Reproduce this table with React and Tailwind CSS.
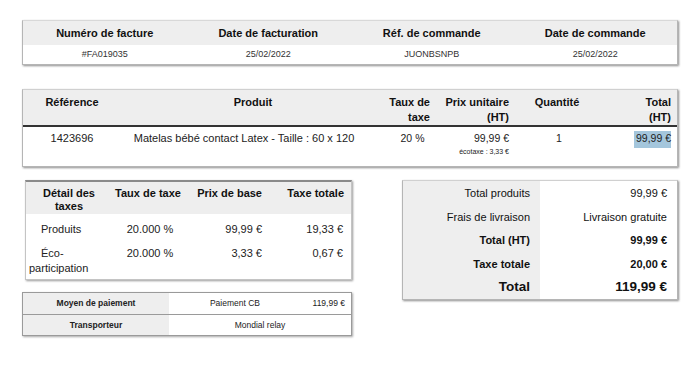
import React from "react";

const box = "border border-[#b5b5b5] shadow-[1px_1px_2px_rgba(0,0,0,0.45)]";

function InvoiceHeader() {
  const cols = [
    ["Numéro de facture", "#FA019035"],
    ["Date de facturation", "25/02/2022"],
    ["Réf. de commande", "JUONBSNPB"],
    ["Date de commande", "25/02/2022"],
  ];
  return (
    <div className={`mx-[22px] mt-[19px] ${box} border-t-[#d8d8d8]`}>
      <div className="grid grid-cols-4 bg-[#eeeeee] h-[24px] items-center">
        {cols.map(([h]) => (
          <div key={h} className="text-center font-bold text-[11px] text-[#111]">{h}</div>
        ))}
      </div>
      <div className="grid grid-cols-4 h-[19px] items-center">
        {cols.map(([h, v]) => (
          <div key={h} className="text-center text-[9px] text-[#333]">{v}</div>
        ))}
      </div>
    </div>
  );
}

function ProductTable() {
  const grid = "grid grid-cols-[96px_264px_53px_79px_84px_82px]";
  return (
    <div className={`mx-[22px] mt-[24px] ${box} border-t-[#d0d0d0]`}>
      <div className={`${grid} bg-[#eeeeee] h-[37px] border-b-2 border-[#333] text-[11px] font-bold text-[#111] leading-[15px] pt-[5px]`}>
        <div className="text-center pl-[2px]">Référence</div>
        <div className="text-center pl-[4px]">Produit</div>
        <div className="text-right pr-[6px]">Taux de<br />taxe</div>
        <div className="text-right pr-[6px]">Prix unitaire<br />(HT)</div>
        <div className="text-center">Quantité</div>
        <div className="text-right pr-[10px]">Total<br />(HT)</div>
      </div>
      <div className={`${grid} h-[39px] text-[10.5px] text-[#222] leading-[15px] pt-[4px]`}>
        <div className="text-center pl-[2px] text-[11px]">1423696</div>
        <div className="text-center whitespace-nowrap pr-[14px] text-[11px]">Matelas bébé contact Latex - Taille : 60 x 120</div>
        <div className="text-center pl-[6px]">20 %</div>
        <div className="text-right pr-[6px]">
          <div>99,99 €</div>
          <div className="text-[7px] leading-[12px]">écotaxe : 3,33 €</div>
        </div>
        <div className="text-center pl-[4px]">1</div>
        <div className="flex justify-end pr-[10px]">
          <span className="bg-[#a4c6dc] pl-[2px] h-[17px] leading-[15px]">99,99 €</span>
        </div>
      </div>
    </div>
  );
}

function TaxDetail() {
  const grid = "grid grid-cols-[84px_76px_82px_85px]";
  return (
    <div className="w-[327px] ml-[3px] border border-[#c4c4c4] border-t-2 border-t-[#8a8a8a] shadow-[1px_1px_2px_rgba(0,0,0,0.4)]">
      <div className={`${grid} bg-[#eeeeee] h-[32px] text-[11px] font-bold text-[#111] leading-[13px] pt-[5px]`}>
        <div className="text-center pl-[2px]">Détail des<br />taxes</div>
        <div className="text-center">Taux de taxe</div>
        <div className="text-right pr-[6px]">Prix de base</div>
        <div className="text-right pr-[9px]">Taxe totale</div>
      </div>
      <div className={`${grid} h-[28px] pt-[8px] text-[11px] text-[#222] leading-[15px]`}>
        <div className="pl-[15px]">Produits</div>
        <div className="text-center pl-[4px]">20.000 %</div>
        <div className="text-right pr-[6px]">99,99 €</div>
        <div className="text-right pr-[10px]">19,33 €</div>
      </div>
      <div className={`${grid} h-[37px] pt-[4px] text-[11px] text-[#222] leading-[15px]`}>
        <div className="pl-[3px]">
          <div className="pl-[12px]">Éco-</div>
          <div>participation</div>
        </div>
        <div className="text-center pl-[4px]">20.000 %</div>
        <div className="text-right pr-[6px]">3,33 €</div>
        <div className="text-right pr-[10px]">0,67 €</div>
      </div>
    </div>
  );
}

function Totals() {
  const rows = [
    ["Total produits", "99,99 €", "font-normal text-[11px]", "h-[25px]"],
    ["Frais de livraison", "Livraison gratuite", "font-normal text-[11px]", "h-[22px]"],
    ["Total (HT)", "99,99 €", "font-bold text-[11px]", "h-[24px]"],
    ["Taxe totale", "20,00 €", "font-bold text-[11px]", "h-[24px]"],
    ["Total", "119,99 €", "font-bold text-[13.5px]", "h-[23px]"],
  ];
  return (
    <div className={`w-[276px] ${box} border-t-[#d0d0d0] grid grid-cols-[137px_139px]`}>
      <div className="bg-[#eeeeee] flex flex-col">
        {rows.map(([l, , f, h]) => (
          <div key={l} className={`${h} ${f} flex items-center justify-end pr-[10px] text-[#111]`}>{l}</div>
        ))}
      </div>
      <div className="flex flex-col">
        {rows.map(([l, v, f, h]) => (
          <div key={l} className={`${h} ${f} flex items-center justify-end pr-[12px] text-[#111]`}>{v}</div>
        ))}
      </div>
    </div>
  );
}

function Payment() {
  return (
    <div className="w-[330px] mt-[12px] border border-[#9a9a9a] shadow-[1px_1px_2px_rgba(0,0,0,0.35)] text-[8.5px] text-[#222]">
      <div className="grid grid-cols-[146px_132px_50px] h-[22px] items-stretch border-b border-[#9a9a9a]">
        <div className="bg-[#eeeeee] font-bold flex items-center justify-center">Moyen de paiement</div>
        <div className="flex items-center justify-center">Paiement CB</div>
        <div className="flex items-center justify-end pr-[6px]">119,99 €</div>
      </div>
      <div className="grid grid-cols-[146px_182px] h-[20px] items-stretch">
        <div className="bg-[#eeeeee] font-bold flex items-center justify-center">Transporteur</div>
        <div className="flex items-center justify-center">Mondial relay</div>
      </div>
    </div>
  );
}

export default function App() {
  return (
    <div className="w-[700px] h-[385px] bg-white overflow-hidden font-['Liberation_Sans',Arial,sans-serif] pt-px">
      <InvoiceHeader />
      <ProductTable />
      <div className="mx-[22px] mt-[13px] flex justify-between items-start">
        <div className="flex flex-col">
          <TaxDetail />
          <Payment />
        </div>
        <Totals />
      </div>
    </div>
  );
}
